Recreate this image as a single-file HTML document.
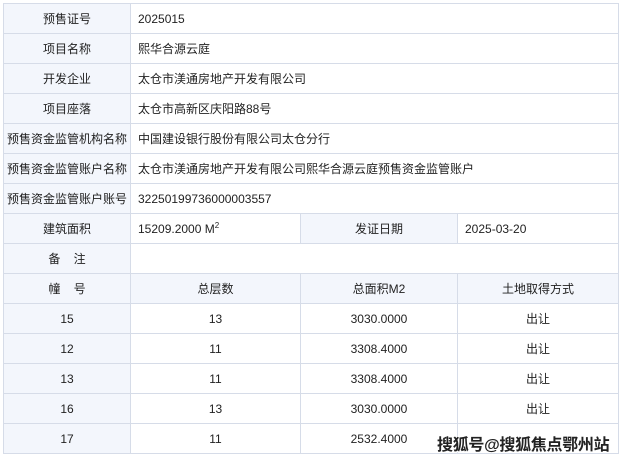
<!DOCTYPE html>
<html><head><meta charset="utf-8"><style>
body{margin:0;background:#fff;width:622px;height:458px;overflow:hidden;position:relative;font-family:"Liberation Sans","Noto Sans CJK SC",sans-serif;font-size:12px;color:#222}
table{position:absolute;left:3px;top:3px;border-collapse:collapse;table-layout:fixed;width:615px}
td{border:1px solid #d6dce8;height:29px;padding:0;white-space:nowrap;overflow:hidden}
.l{background:#f3f6fc;text-align:center}
.v{padding-left:7px}
.c{text-align:center}
.wm{position:absolute;left:437px;top:431px;font-size:16px;font-weight:bold;color:#222;letter-spacing:-0.3px;text-shadow:1px 0 #fff,-1px 0 #fff,0 1px #fff,0 -1px #fff,1px 1px #fff,-1px -1px #fff}
</style></head><body>
<table>
<colgroup><col style="width:127px"><col style="width:170px"><col style="width:157px"><col style="width:161px"></colgroup>
<tr><td class="l">预售证号</td><td class="v" colspan="3">2025015</td></tr>
<tr><td class="l">项目名称</td><td class="v" colspan="3">熙华合源云庭</td></tr>
<tr><td class="l">开发企业</td><td class="v" colspan="3">太仓市渼通房地产开发有限公司</td></tr>
<tr><td class="l">项目座落</td><td class="v" colspan="3">太仓市高新区庆阳路88号</td></tr>
<tr><td class="l">预售资金监管机构名称</td><td class="v" colspan="3">中国建设银行股份有限公司太仓分行</td></tr>
<tr><td class="l">预售资金监管账户名称</td><td class="v" colspan="3">太仓市渼通房地产开发有限公司熙华合源云庭预售资金监管账户</td></tr>
<tr><td class="l">预售资金监管账户账号</td><td class="v" colspan="3">32250199736000003557</td></tr>
<tr><td class="l">建筑面积</td><td class="v">15209.2000 M<sup style="font-size:8px">2</sup></td><td class="l">发证日期</td><td class="v">2025-03-20</td></tr>
<tr><td class="l">备&nbsp;&nbsp;&nbsp;&nbsp;注</td><td colspan="3"></td></tr>
<tr><td class="l">幢&nbsp;&nbsp;&nbsp;&nbsp;号</td><td class="l">总层数</td><td class="l">总面积M2</td><td class="l">土地取得方式</td></tr>
<tr><td class="l">15</td><td class="c">13</td><td class="c">3030.0000</td><td class="c">出让</td></tr>
<tr><td class="l">12</td><td class="c">11</td><td class="c">3308.4000</td><td class="c">出让</td></tr>
<tr><td class="l">13</td><td class="c">11</td><td class="c">3308.4000</td><td class="c">出让</td></tr>
<tr><td class="l">16</td><td class="c">13</td><td class="c">3030.0000</td><td class="c">出让</td></tr>
<tr><td class="l">17</td><td class="c">11</td><td class="c">2532.4000</td><td class="c"></td></tr>
</table>
<div class="wm">搜狐号@搜狐焦点鄂州站</div>
</body></html>
